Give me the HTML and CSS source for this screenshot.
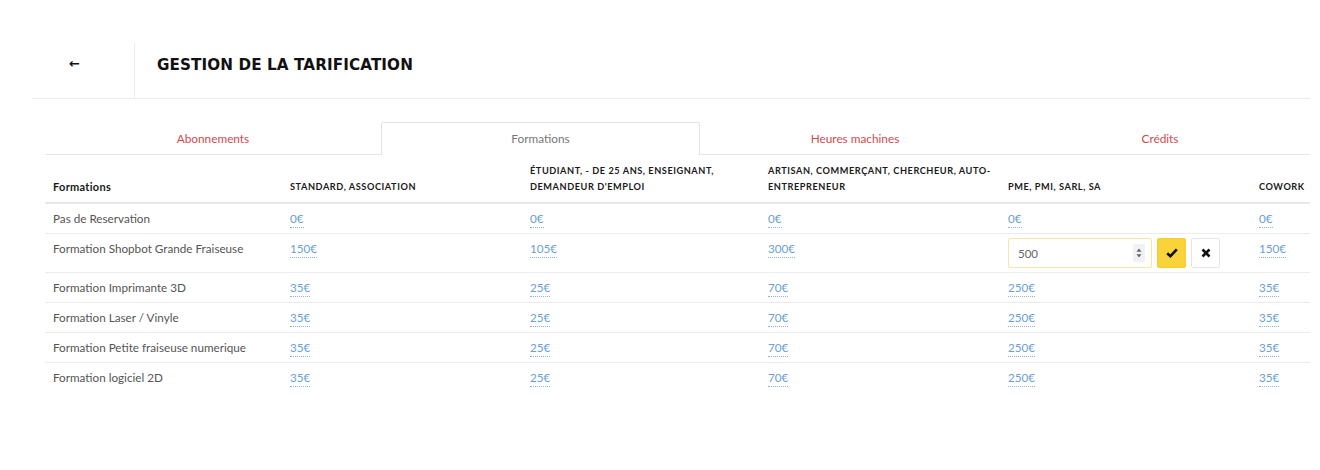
FILE: index.html
```html
<!DOCTYPE html>
<html lang="fr">
<head>
<meta charset="utf-8">
<title>Gestion de la tarification</title>
<link rel="stylesheet" href="styles.css">
</head>
<body>
<div class="page">
  <header class="topbar">
    <div class="back"><span class="arrow">&larr;</span></div>
    <h1 class="title">GESTION DE LA TARIFICATION</h1>
  </header>

  <div class="content">
    <nav class="tabs">
      <a class="tab">Abonnements</a>
      <a class="tab active">Formations</a>
      <a class="tab">Heures machines</a>
      <a class="tab">Crédits</a>
    </nav>

    <table class="prices">
      <colgroup>
        <col class="c1"><col class="c2"><col class="c3"><col class="c4"><col class="c5"><col class="c6">
      </colgroup>
      <thead>
        <tr>
          <th class="first">Formations</th>
          <th>STANDARD, ASSOCIATION</th>
          <th>ÉTUDIANT, - DE 25 ANS, ENSEIGNANT,<br>DEMANDEUR D'EMPLOI</th>
          <th>ARTISAN, COMMERÇANT, CHERCHEUR, AUTO-<br>ENTREPRENEUR</th>
          <th>PME, PMI, SARL, SA</th>
          <th>COWORK</th>
        </tr>
      </thead>
      <tbody>
        <tr>
          <td>Pas de Reservation</td>
          <td><a class="val">0€</a></td>
          <td><a class="val">0€</a></td>
          <td><a class="val">0€</a></td>
          <td><a class="val">0€</a></td>
          <td><a class="val">0€</a></td>
        </tr>
        <tr>
          <td>Formation Shopbot Grande Fraiseuse</td>
          <td><a class="val">150€</a></td>
          <td><a class="val">105€</a></td>
          <td><a class="val">300€</a></td>
          <td class="editing">
            <form class="edit">
              <div class="num">
                <input class="num-input" type="text" value="500">
                <span class="spin"><svg width="8" height="12" viewBox="0 0 8 12"><path d="M4 1.5 L6.5 4.8 H1.5 Z M4 10.5 L6.5 7.2 H1.5 Z" fill="#666"/></svg></span>
              </div>
              <button type="button" class="btn ok">
                <svg width="12" height="10" viewBox="0 0 12 10"><path d="M1.2 5.2 L4.4 8.2 L10.8 1.4" fill="none" stroke="#111" stroke-width="2.6" stroke-linejoin="miter"/></svg>
              </button>
              <button type="button" class="btn cancel">
                <svg width="10" height="10" viewBox="0 0 10 10"><path d="M1.5 1.5 L8.5 8.5 M8.5 1.5 L1.5 8.5" stroke="#111" stroke-width="2.6"/></svg>
              </button>
            </form>
          </td>
          <td><a class="val">150€</a></td>
        </tr>
        <tr>
          <td>Formation Imprimante 3D</td>
          <td><a class="val">35€</a></td>
          <td><a class="val">25€</a></td>
          <td><a class="val">70€</a></td>
          <td><a class="val">250€</a></td>
          <td><a class="val">35€</a></td>
        </tr>
        <tr>
          <td>Formation Laser / Vinyle</td>
          <td><a class="val">35€</a></td>
          <td><a class="val">25€</a></td>
          <td><a class="val">70€</a></td>
          <td><a class="val">250€</a></td>
          <td><a class="val">35€</a></td>
        </tr>
        <tr>
          <td>Formation Petite fraiseuse numerique</td>
          <td><a class="val">35€</a></td>
          <td><a class="val">25€</a></td>
          <td><a class="val">70€</a></td>
          <td><a class="val">250€</a></td>
          <td><a class="val">35€</a></td>
        </tr>
        <tr>
          <td>Formation logiciel 2D</td>
          <td><a class="val">35€</a></td>
          <td><a class="val">25€</a></td>
          <td><a class="val">70€</a></td>
          <td><a class="val">250€</a></td>
          <td><a class="val">35€</a></td>
        </tr>
      </tbody>
    </table>
  </div>
</div>
</body>
</html>
```

FILE: styles.css
```css
* { box-sizing: border-box; }

html, body {
  margin: 0;
  padding: 0;
  background: #fff;
}

body {
  font-family: Lato, "Open Sans", "Liberation Sans", sans-serif;
  font-size: 11.7px;
  color: #555;
}

.page {
  padding: 43px 10px 0 32px;
}

.topbar {
  display: flex;
  height: 56px;
  border-bottom: 1px solid #ececec;
}

.back {
  width: 103px;
  border-right: 1px solid #ececec;
  padding: 11px 0 0 37px;
}

.arrow {
  font-family: "DejaVu Sans", sans-serif;
  font-size: 13px;
  font-weight: bold;
  color: #111;
  line-height: 20px;
}

.title {
  margin: 0 0 0 22px;
  padding-top: 12px;
  font-family: "DejaVu Sans", Lato, sans-serif;
  font-weight: 700;
  font-size: 15.2px;
  line-height: 20px;
  color: #111;
  letter-spacing: 0.1px;
}

.content {
  padding-left: 13px;
  padding-top: 23px;
}

.tabs {
  display: grid;
  grid-template-columns: 336px 319px 310px 1fr;
  border-bottom: 1px solid #e6e6e6;
}

.tab {
  display: block;
  text-align: center;
  height: 32px;
  line-height: 31px;
  font-size: 11.8px;
  color: #d24a4f;
  border: 1px solid transparent;
  border-bottom: none;
  margin-bottom: -1px;
}

.tab.active {
  color: #777;
  background: #fff;
  border-color: #e3e3e3;
  height: 33px;
  border-radius: 2px 2px 0 0;
}

.prices {
  width: 100%;
  border-collapse: collapse;
  table-layout: fixed;
}

.c1 { width: 237px; }
.c2 { width: 240px; }
.c3 { width: 238px; }
.c4 { width: 240px; }
.c5 { width: 251px; }
.c6 { width: auto; }

.prices th {
  text-align: left;
  vertical-align: bottom;
  padding: 8px;
  font-size: 9.2px;
  font-weight: 700;
  line-height: 15.5px;
  color: #1a1a1a;
  letter-spacing: 0.55px;
  border-bottom: 2px solid #e8e8e8;
  white-space: nowrap;
}

.prices th.first {
  font-size: 11px;
  letter-spacing: 0.3px;
}

.prices td {
  padding: 7px 8px;
  line-height: 15px;
  vertical-align: top;
  border-top: 1px solid #ececec;
  color: #555;
  white-space: nowrap;
}

.prices tbody tr:first-child td {
  border-top: none;
}

.val {
  color: #6b9fd6;
  border-bottom: 1px dotted #8fb3dc;
  padding-bottom: 2px;
  text-decoration: none;
}

.prices td.editing {
  padding: 4px 8px;
}

.edit {
  display: flex;
  gap: 5px;
  margin: 0;
}

.num {
  display: flex;
  align-items: center;
  width: 144px;
  height: 30px;
  border: 1px solid #f6e7a8;
  border-radius: 2px;
  background: #fff;
  padding: 0 6px 0 9px;
}

.num-input {
  flex: 1;
  min-width: 0;
  border: none;
  outline: none;
  padding: 0;
  font-family: inherit;
  font-size: 11.5px;
  color: #666;
  background: transparent;
}

.spin {
  display: flex;
  align-items: center;
  justify-content: center;
  width: 12px;
  height: 18px;
  background: #f1f1f1;
  border-radius: 2px;
}

.btn {
  width: 29px;
  height: 30px;
  padding: 0;
  border-radius: 2px;
  display: flex;
  align-items: center;
  justify-content: center;
  cursor: pointer;
}

.btn.ok {
  background: #f8d33a;
  border: 1px solid #f5cd2a;
}

.btn.cancel {
  background: #fff;
  border: 1px solid #e6e6e6;
}
```
